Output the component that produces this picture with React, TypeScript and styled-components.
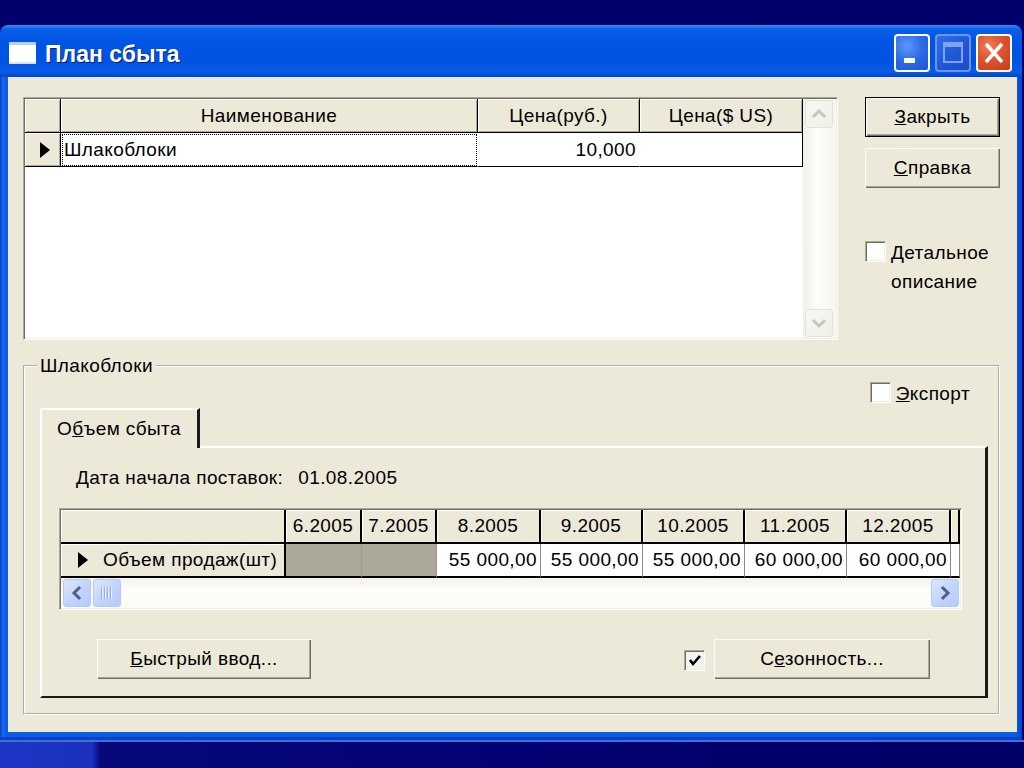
import React from "react";
import styled, { createGlobalStyle, css } from "styled-components";

const GlobalStyle = createGlobalStyle`
  html, body { margin: 0; padding: 0; background: #000066; }
  body {
    font-family: "Liberation Sans", Arial, sans-serif;
    font-size: 19px;
    letter-spacing: 0.4px;
    color: #000;
    overflow: hidden;
  }
  * { box-sizing: border-box; }
`;

const sunken = css`
  border: 1px solid;
  border-color: #aca899 #ffffff #ffffff #aca899;
  padding: 1px;
  box-shadow: inset 1px 1px #716f64, inset -1px -1px #f1efe2;
`;

const Screen = styled.div`
  width: 1024px;
  height: 768px;
  display: flex;
  flex-direction: column;
  background: #000066;
  overflow: hidden;
`;

const TopBand = styled.div`
  height: 25px;
  flex: none;
  background: #00006a;
`;

const Window = styled.div`
  width: 1022px;
  height: 715px;
  flex: none;
  display: flex;
  flex-direction: column;
`;

const TitleBar = styled.div`
  height: 52px;
  flex: none;
  display: flex;
  align-items: center;
  padding: 4px 10px 0 9px;
  border-radius: 8px 8px 0 0;
  background: linear-gradient(
    to bottom,
    #3d8cf6 0,
    #0a5fe8 4px,
    #0055e5 30%,
    #0053e1 70%,
    #0a5ce8 90%,
    #0043cc 100%
  );
`;

const TitleText = styled.div`
  margin-left: 9px;
  flex: 1;
  color: #fff;
  font-weight: bold;
  font-size: 23px;
  letter-spacing: 0;
  text-shadow: 1px 1px #0a1a80;
  padding-top: 2px;
`;

const TitleButtons = styled.div`
  display: flex;
  gap: 5px;
`;

const CaptionButton = styled.div<{ $kind: "min" | "max" | "close" }>`
  width: 36px;
  height: 38px;
  border-radius: 4px;
  border: 2px solid ${(p) => (p.$kind === "max" ? "#6d95ee" : "#ffffff")};
  display: flex;
  align-items: center;
  justify-content: center;
  background: ${(p) =>
    p.$kind === "close"
      ? "radial-gradient(circle at 35% 30%, #ee7d5e 0, #dc5430 45%, #c43d1b 100%)"
      : p.$kind === "max"
      ? "linear-gradient(135deg, #2f6ee8 0, #1e55d6 60%, #1a4ccb 100%)"
      : "radial-gradient(circle at 35% 30%, #5a98fb 0, #2c6ae6 50%, #1d55d6 100%)"};
`;

const Body = styled.div`
  flex: 1;
  display: flex;
  padding: 0 8px 8px;
  background: linear-gradient(
    to right,
    #0a3fc2 0,
    #1868f0 3px,
    #0a5be6 6px,
    #0a5be6 calc(100% - 6px),
    #0842c8 100%
  );
  box-shadow: inset 0 -3px #0743c5;
`;

const Client = styled.div`
  flex: 1;
  display: flex;
  flex-direction: column;
  background: #ece9d8;
  padding: 20px 17px 17px 15px;
`;

const TopSection = styled.div`
  display: flex;
  height: 243px;
  flex: none;
`;

const ItemsGrid = styled.div`
  ${sunken};
  width: 815px;
  display: flex;
  background: #fff;
`;

const ItemsTable = styled.div`
  flex: 1;
  display: grid;
  grid-template-columns: 36px 417px 162px 163px;
  grid-auto-rows: 34px;
  align-content: start;
  background: #fff;
`;

const HeadCell = styled.div<{ $align?: string }>`
  display: flex;
  align-items: center;
  justify-content: ${(p) => p.$align || "center"};
  background: #ece9d8;
  border-right: 1px solid #000;
  border-bottom: 1px solid #000;
  box-shadow: inset 1px 1px #fff, inset -1px -1px #aca899;
  white-space: nowrap;
  overflow: hidden;
`;

const IndicatorCell = styled(HeadCell)`
  justify-content: flex-start;
  padding-left: 15px;
  gap: 15px;
`;

const Cell = styled.div<{ $align?: string; $focus?: boolean; $line?: boolean; $muted?: boolean }>`
  display: flex;
  align-items: center;
  justify-content: ${(p) => p.$align || "flex-start"};
  padding: 0 3px;
  white-space: nowrap;
  overflow: hidden;
  background: ${(p) => (p.$muted ? "#aca899" : "#fff")};
  border-bottom: 1px solid #000;
  border-right: 1px solid ${(p) => (p.$line ? "#000" : p.$muted ? "#9a9788" : "transparent")};
  ${(p) =>
    p.$focus &&
    css`
      outline: 1px dotted #000;
      outline-offset: -2px;
    `}
`;

const Pointer = styled.span`
  width: 0;
  height: 0;
  flex: none;
  border-left: 10px solid #000;
  border-top: 8px solid transparent;
  border-bottom: 8px solid transparent;
`;

const VScroll = styled.div`
  width: 33px;
  flex: none;
  display: flex;
  flex-direction: column;
  justify-content: space-between;
  padding: 1px 3px 1px 2px;
  background: linear-gradient(to right, #f1f0ea 0, #fdfdfb 45%, #f6f5f0 100%);
`;

const ScrollBtn = styled.div<{ $active?: boolean }>`
  width: 28px;
  height: 28px;
  flex: none;
  display: flex;
  align-items: center;
  justify-content: center;
  border-radius: 3px;
  border: 1px solid ${(p) => (p.$active ? "#b5c9f5" : "#e4e2d8")};
  background: ${(p) =>
    p.$active
      ? "linear-gradient(135deg, #dde7fe 0, #c3d4fc 50%, #b6cbfa 100%)"
      : "linear-gradient(135deg, #f8f8f4 0, #f0efe8 100%)"};
`;

const SideColumn = styled.div`
  margin-left: 27px;
  display: flex;
  flex-direction: column;
  gap: 11px;
`;

const Button = styled.button<{ $w: number; $default?: boolean }>`
  width: ${(p) => p.$w}px;
  height: 40px;
  flex: none;
  padding: 0;
  font: inherit;
  letter-spacing: inherit;
  color: #000;
  background: #ece9d8;
  border: ${(p) => (p.$default ? "1px solid #000" : "none")};
  box-shadow: inset 1px 1px #fff, inset -1px -1px #716f64, inset -2px -2px #aca899;
  cursor: default;
`;

const CheckRow = styled.label<{ $top?: number }>`
  display: flex;
  align-items: flex-start;
  gap: 5px;
  margin-top: ${(p) => p.$top || 0}px;
  line-height: 29px;
`;

const CheckBox = styled.span<{ $bg?: string }>`
  width: 21px;
  height: 21px;
  flex: none;
  margin-top: 3px;
  display: flex;
  align-items: center;
  justify-content: center;
  background: ${(p) => p.$bg || "#fff"};
  border: 1px solid;
  border-color: #aca899 #fff #fff #aca899;
  box-shadow: inset 1px 1px #716f64, inset -1px -1px #f1efe2;
`;

const Group = styled.fieldset`
  flex: 1;
  margin: 15px 0 0;
  padding: 0;
  border: 2px groove #fff;
  display: flex;
  flex-direction: column;
  min-width: 0;
`;

const Legend = styled.legend`
  margin-left: 12px;
  padding: 0 3px;
  line-height: 22px;
`;

const ExportRow = styled.div`
  display: flex;
  justify-content: flex-end;
  padding-right: 28px;
  margin-top: 2px;
  height: 24px;
`;

const TabArea = styled.div`
  flex: 1;
  display: flex;
  flex-direction: column;
  margin: 5px 10px 15px 15px;
`;

const TabStrip = styled.div`
  height: 38px;
  flex: none;
  display: flex;
`;

const Tab = styled.div`
  width: 160px;
  position: relative;
  z-index: 1;
  margin-bottom: -2px;
  display: flex;
  align-items: center;
  padding-left: 15px;
  background: #ece9d8;
  border-top: 2px solid #fff;
  border-left: 2px solid #fff;
  border-right: 3px solid #1a1a1a;
  border-radius: 3px 0 0 0;
`;

const TabPanel = styled.div`
  flex: 1;
  display: flex;
  flex-direction: column;
  border-top: 2px solid #fff;
  border-left: 2px solid #fff;
  border-right: 3px solid #1a1a1a;
  border-bottom: 2px solid #1a1a1a;
`;

const DateLine = styled.div`
  margin: 19px 0 0 34px;
  line-height: 22px;
  display: flex;
  gap: 15px;
`;

const SalesGrid = styled.div`
  ${sunken};
  width: 903px;
  margin: 19px 0 0 17px;
  display: grid;
  grid-template-columns: 225px 76px 75px 104px 102px 102px 102px 104px 1fr;
  grid-template-rows: 34px 34px 30px;
  background: #fff;
`;

const SalesHead = styled(HeadCell)`
  border-bottom: 2px solid #000;
  border-right: 2px solid #000;
  box-shadow: inset 1px 1px #fff;
`;

const RowHead = styled(SalesHead)`
  justify-content: flex-start;
  padding-left: 17px;
  gap: 15px;
`;

const SalesCell = styled(Cell)`
  border-bottom: 2px solid #000;
  border-right: 1px solid ${(p) => (p.$muted ? "#9a9788" : "#8a8a80")};
`;

const HScroll = styled.div`
  grid-column: 1 / -1;
  display: flex;
  align-items: center;
  gap: 2px;
  padding: 0 1px 0 2px;
  background: linear-gradient(to bottom, #f2f1ec 0, #fdfdfb 40%, #fbfbf8 100%);
`;

const Thumb = styled(ScrollBtn)`
  width: 28px;
`;

const Spacer = styled.div`
  flex: 1;
`;

const ButtonRow = styled.div`
  display: flex;
  justify-content: space-between;
  align-items: center;
  margin-top: 29px;
  padding: 0 55px 0 55px;
`;

const RightGroup = styled.div`
  display: flex;
  align-items: center;
  gap: 9px;
`;

const BottomBand = styled.div`
  flex: 1;
  border-top: 2px solid #4a6ad8;
  background: linear-gradient(
    to right,
    #1d36c6 0,
    #1a31bd 92px,
    #07087a 100px,
    #020274 50%,
    #000066 100%
  );
`;

function Chevron({ dir, color }: { dir: "up" | "down" | "left" | "right"; color: string }) {
  const d = {
    up: "M3 10 L8 5 L13 10",
    down: "M3 6 L8 11 L13 6",
    left: "M10 3 L5 8 L10 13",
    right: "M6 3 L11 8 L6 13",
  }[dir];
  return (
    <svg width="16" height="16" viewBox="0 0 16 16">
      <path d={d} fill="none" stroke={color} strokeWidth="3" strokeLinecap="square" />
    </svg>
  );
}

function Grip() {
  return (
    <svg width="14" height="12" viewBox="0 0 14 12">
      {[1, 4, 7, 10].map((x) => (
        <g key={x}>
          <rect x={x} y="0" width="1" height="12" fill="#8caef2" />
          <rect x={x + 1} y="0" width="1" height="12" fill="#eef3fe" />
        </g>
      ))}
    </svg>
  );
}

function Check() {
  return (
    <svg width="14" height="14" viewBox="0 0 14 14">
      <path d="M2 6 L5 10 L12 2" fill="none" stroke="#000" strokeWidth="2.6" />
    </svg>
  );
}

const months = ["6.2005", "7.2005", "8.2005", "9.2005", "10.2005", "11.2005", "12.2005"];
const volumes = ["", "", "55 000,00", "55 000,00", "55 000,00", "60 000,00", "60 000,00"];

export default function App() {
  return (
    <>
      <GlobalStyle />
      <Screen>
        <TopBand />
        <Window>
          <TitleBar>
            <svg width="27" height="22" viewBox="0 0 27 22">
              <rect x="0" y="0" width="27" height="22" fill="#ffffff" />
              <rect x="0" y="0" width="27" height="3" fill="#b9d0f4" />
              <rect x="0" y="20" width="27" height="2" fill="#d9e4f6" />
            </svg>
            <TitleText>План сбыта</TitleText>
            <TitleButtons>
              <CaptionButton $kind="min">
                <svg width="30" height="32" viewBox="0 0 30 32">
                  <rect x="7" y="21" width="11" height="5" fill="#fff" />
                </svg>
              </CaptionButton>
              <CaptionButton $kind="max">
                <svg width="30" height="32" viewBox="0 0 30 32">
                  <rect x="6" y="6" width="18" height="19" fill="none" stroke="#7fa3f0" strokeWidth="2" />
                  <rect x="6" y="6" width="18" height="4" fill="#7fa3f0" />
                </svg>
              </CaptionButton>
              <CaptionButton $kind="close">
                <svg width="30" height="32" viewBox="0 0 30 32">
                  <path d="M7 7 L23 25 M23 7 L7 25" stroke="#fff" strokeWidth="3.5" />
                </svg>
              </CaptionButton>
            </TitleButtons>
          </TitleBar>
          <Body>
            <Client>
              <TopSection>
                <ItemsGrid>
                  <ItemsTable>
                    <HeadCell />
                    <HeadCell>Наименование</HeadCell>
                    <HeadCell>Цена(руб.)</HeadCell>
                    <HeadCell>Цена($ US)</HeadCell>
                    <IndicatorCell>
                      <Pointer />
                    </IndicatorCell>
                    <Cell $focus>Шлакоблоки</Cell>
                    <Cell $align="flex-end">10,000</Cell>
                    <Cell $line />
                  </ItemsTable>
                  <VScroll>
                    <ScrollBtn>
                      <Chevron dir="up" color="#c8c6bb" />
                    </ScrollBtn>
                    <ScrollBtn>
                      <Chevron dir="down" color="#c8c6bb" />
                    </ScrollBtn>
                  </VScroll>
                </ItemsGrid>
                <SideColumn>
                  <Button $w={135} $default>
                    <u>З</u>акрыть
                  </Button>
                  <Button $w={135}>
                    <u>С</u>правка
                  </Button>
                  <CheckRow $top={39}>
                    <CheckBox />
                    <span>
                      <u>Д</u>етальное
                      <br />
                      описание
                    </span>
                  </CheckRow>
                </SideColumn>
              </TopSection>

              <Group>
                <Legend>Шлакоблоки</Legend>
                <ExportRow>
                  <CheckRow>
                    <CheckBox />
                    <span>
                      <u>Э</u>кспорт
                    </span>
                  </CheckRow>
                </ExportRow>
                <TabArea>
                  <TabStrip>
                    <Tab>
                      О<u>б</u>ъем сбыта
                    </Tab>
                  </TabStrip>
                  <TabPanel>
                    <DateLine>
                      <span>Дата начала поставок:</span>
                      <span>01.08.2005</span>
                    </DateLine>
                    <SalesGrid>
                      <SalesHead />
                      {months.map((m) => (
                        <SalesHead key={m}>{m}</SalesHead>
                      ))}
                      <SalesHead />
                      <RowHead>
                        <Pointer />
                        Объем продаж(шт)
                      </RowHead>
                      {volumes.map((v, i) => (
                        <SalesCell key={i} $align="flex-end" $muted={v === ""}>
                          {v}
                        </SalesCell>
                      ))}
                      <SalesCell />
                      <HScroll>
                        <ScrollBtn $active>
                          <Chevron dir="left" color="#4d6185" />
                        </ScrollBtn>
                        <Thumb $active>
                          <Grip />
                        </Thumb>
                        <Spacer />
                        <ScrollBtn $active>
                          <Chevron dir="right" color="#4d6185" />
                        </ScrollBtn>
                      </HScroll>
                    </SalesGrid>
                    <ButtonRow>
                      <Button $w={214}>
                        <u>Б</u>ыстрый ввод...
                      </Button>
                      <RightGroup>
                        <CheckBox $bg="#f4f3ee">
                          <Check />
                        </CheckBox>
                        <Button $w={216}>
                          С<u>е</u>зонность...
                        </Button>
                      </RightGroup>
                    </ButtonRow>
                  </TabPanel>
                </TabArea>
              </Group>
            </Client>
          </Body>
        </Window>
        <BottomBand />
      </Screen>
    </>
  );
}
